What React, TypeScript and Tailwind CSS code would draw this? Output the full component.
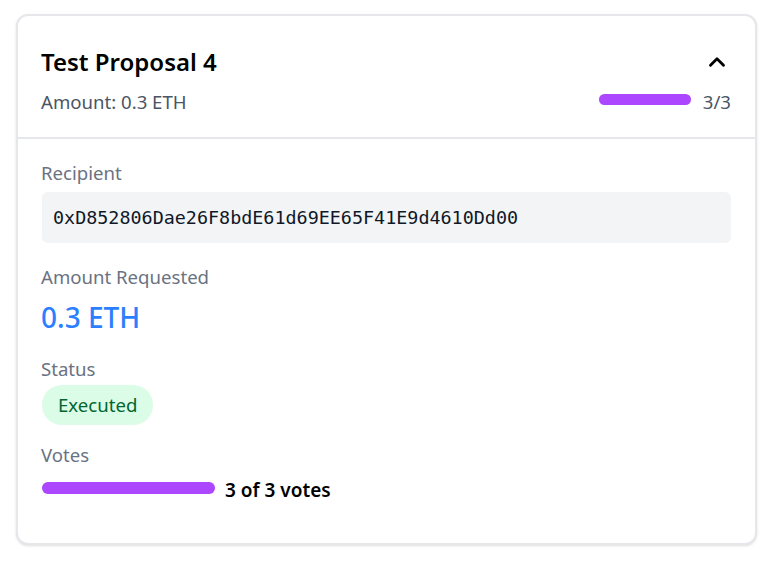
import { ChevronUp } from "lucide-react";

const proposal = {
  title: "Test Proposal 4",
  amount: "0.3 ETH",
  recipient: "0xD852806Dae26F8bdE61d69EE65F41E9d4610Dd00",
  status: "Executed",
  votes: 3,
  required: 3,
};

const App = () => {
  const pct = (proposal.votes / proposal.required) * 100;

  return (
    <div className="min-h-screen bg-white pl-4 pt-[14px] font-['Noto_Sans',sans-serif]">
      <div className="w-[741px] rounded-xl border-2 border-gray-200 bg-white shadow-sm">
        {/* Header */}
        <div className="border-b-2 border-gray-200 pl-[23px] pr-6 pt-[28px] pb-[21px]">
          <div className="flex h-9 items-center justify-between">
            <h2 className="text-2xl leading-9 font-semibold text-black">{proposal.title}</h2>
            <button className="mr-[1px] text-black">
              <ChevronUp size={26} strokeWidth={2.6} />
            </button>
          </div>
          <div className="mt-2 flex h-7 items-center justify-between">
            <p className="text-[18.6px] leading-7 text-gray-600">Amount: {proposal.amount}</p>
            <div className="flex items-center gap-[12px]">
              <div className="mb-[5px] h-[11px] w-[92px] rounded-full bg-gray-200">
                <div className="h-full rounded-full bg-purple-500" style={{ width: `${pct}%` }} />
              </div>
              <span className="text-[18.6px] leading-7 text-gray-600">
                {proposal.votes}/{proposal.required}
              </span>
            </div>
          </div>
        </div>

        {/* Details */}
        <div className="px-6 pt-5 pb-[39px]">
          <p className="-ml-px text-[18.6px] leading-7 text-gray-500">Recipient</p>
          <div className="mt-[5px] rounded-md bg-gray-100 px-[11px] py-3 font-['DejaVu_Sans_Mono',monospace] text-[18.4px] leading-[27px] text-gray-900">
            {proposal.recipient}
          </div>

          <p className="mt-5 -ml-px text-[18.6px] leading-7 text-gray-500">Amount Requested</p>
          <p className="mt-2 -ml-px text-[28px] leading-9 font-medium text-blue-500">{proposal.amount}</p>

          <p className="mt-5 -ml-px text-[18.6px] leading-7 text-gray-500">Status</p>
          <span className="mt-[2px] inline-flex h-10 items-center rounded-full bg-green-100 px-4 text-[18.6px] text-green-800">
            {proposal.status}
          </span>

          <p className="mt-4 -ml-px text-[18.6px] leading-7 text-gray-500">Votes</p>
          <div className="mt-[7px] flex h-7 items-center gap-[10px]">
            <div className="mb-1 h-3 w-[173px] rounded-full bg-gray-200">
              <div className="h-full rounded-full bg-purple-500" style={{ width: `${pct}%` }} />
            </div>
            <span className="text-[19px] leading-7 font-semibold text-black">
              {proposal.votes} of {proposal.required} votes
            </span>
          </div>
        </div>
      </div>
    </div>
  );
};

export default App;
